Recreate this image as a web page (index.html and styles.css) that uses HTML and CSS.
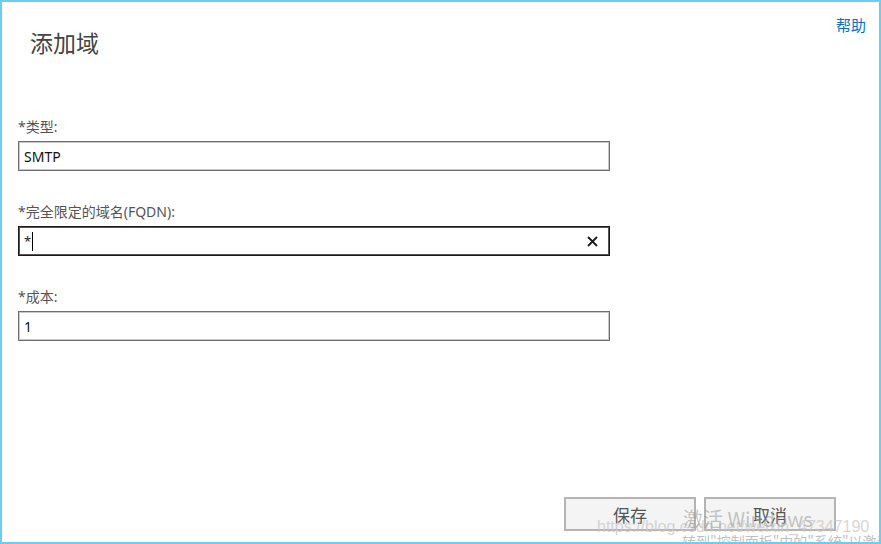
FILE: index.html
```html
<!DOCTYPE html>
<html lang="zh-CN">
<head>
<meta charset="utf-8">
<title>添加域</title>
<link rel="stylesheet" href="styles.css">
</head>
<body>
<div class="window">
  <header class="head">
    <h1 class="title">添加域</h1>
    <a class="help" href="#">帮助</a>
  </header>
  <div class="fields">
    <div class="field">
      <label class="label">*类型:</label>
      <div class="input">SMTP</div>
    </div>
    <div class="field">
      <label class="label">*完全限定的域名(FQDN):</label>
      <div class="input focused">
        <span class="value">*</span><span class="caret"></span>
        <svg class="clear" width="11" height="11" viewBox="0 0 11 11"><path d="M1 1 L10 10 M10 1 L1 10" stroke="#1a1a1a" stroke-width="1.8" fill="none"/></svg>
      </div>
    </div>
    <div class="field">
      <label class="label">*成本:</label>
      <div class="input">1</div>
    </div>
  </div>
  <div class="actions">
    <button class="btn">保存</button>
    <button class="btn">取消</button>
  </div>
  <div class="wm-url">https://blog.csdn.net/weixin_47347190</div>
  <div class="wm-act">激活 Windows</div>
  <div class="wm-sub">转到"控制面板"中的"系统"以激活 Windows。</div>
</div>
</body>
</html>
```
FILE: styles.css
```css
html, body {
  margin: 0;
  padding: 0;
  background: #fff;
}
body {
  font-family: "Noto Sans", "Noto Sans CJK SC", sans-serif;
  color: #333;
}
.window {
  position: relative;
  width: 881px;
  height: 544px;
  box-sizing: border-box;
  border: 2px solid #6ccdee;
  overflow: hidden;
  display: flex;
  flex-direction: column;
}
.head {
  display: flex;
  justify-content: space-between;
  align-items: flex-start;
  padding: 13px 13px 0 28px;
}
.title {
  margin: 12px 0 0 0;
  height: 30px;
  font-family: "Noto Sans CJK SC", sans-serif;
  font-weight: 400;
  font-size: 23px;
  line-height: 30px;
  color: #444;
}
.help {
  font-family: "Noto Sans CJK SC", sans-serif;
  font-size: 15px;
  line-height: 20px;
  color: #0a6fc2;
  text-decoration: none;
}
.fields {
  display: flex;
  flex-direction: column;
  gap: 31px;
  margin-top: 60px;
  padding-left: 16px;
}
.field {
  display: flex;
  flex-direction: column;
  gap: 4px;
}
.label {
  display: block;
  height: 20px;
  font-family: "Noto Sans", "Noto Sans CJK SC", sans-serif;
  font-size: 14px;
  line-height: 20px;
  color: #555;
}
.input {
  width: 592px;
  height: 30px;
  box-sizing: border-box;
  border: 1px solid #6e6e6e;
  box-shadow: inset 0 0 0 1px #c8c8c8;
  padding: 0 5px;
  display: flex;
  align-items: center;
  font-family: "Noto Sans", sans-serif;
  font-size: 14px;
  color: #111;
}
.input.focused {
  border: 1px solid #1a1a1a;
  box-shadow: inset 0 0 0 1px #555;
}
.value {
  font-size: 13px;
  color: #222;
}
.caret {
  width: 1px;
  height: 19px;
  background: #000;
  margin-left: 1px;
}
.clear {
  margin-left: auto;
  margin-right: 6px;
}
.actions {
  margin-top: auto;
  display: flex;
  justify-content: flex-end;
  gap: 8px;
  padding: 0 43px 11px 0;
}
.btn {
  width: 132px;
  height: 34px;
  box-sizing: border-box;
  border: 2px solid #b4b4b4;
  background: #f4f4f4;
  font-family: "Noto Sans CJK SC", sans-serif;
  font-size: 17px;
  color: #555;
  padding: 0;
}
.wm-url {
  position: absolute;
  left: 595px;
  top: 516px;
  font-family: "Liberation Sans", sans-serif;
  font-size: 16px;
  color: rgba(200, 200, 200, 0.75);
  white-space: nowrap;
}
.wm-act {
  position: absolute;
  left: 681px;
  top: 504px;
  font-family: "Noto Sans CJK SC", sans-serif;
  font-size: 20px;
  line-height: 26px;
  color: rgba(150, 150, 150, 0.55);
  white-space: nowrap;
}
.wm-sub {
  position: absolute;
  left: 680px;
  top: 530px;
  font-family: "Noto Sans CJK SC", sans-serif;
  font-size: 14px;
  line-height: 18px;
  color: rgba(150, 150, 150, 0.6);
  white-space: nowrap;
}
```
